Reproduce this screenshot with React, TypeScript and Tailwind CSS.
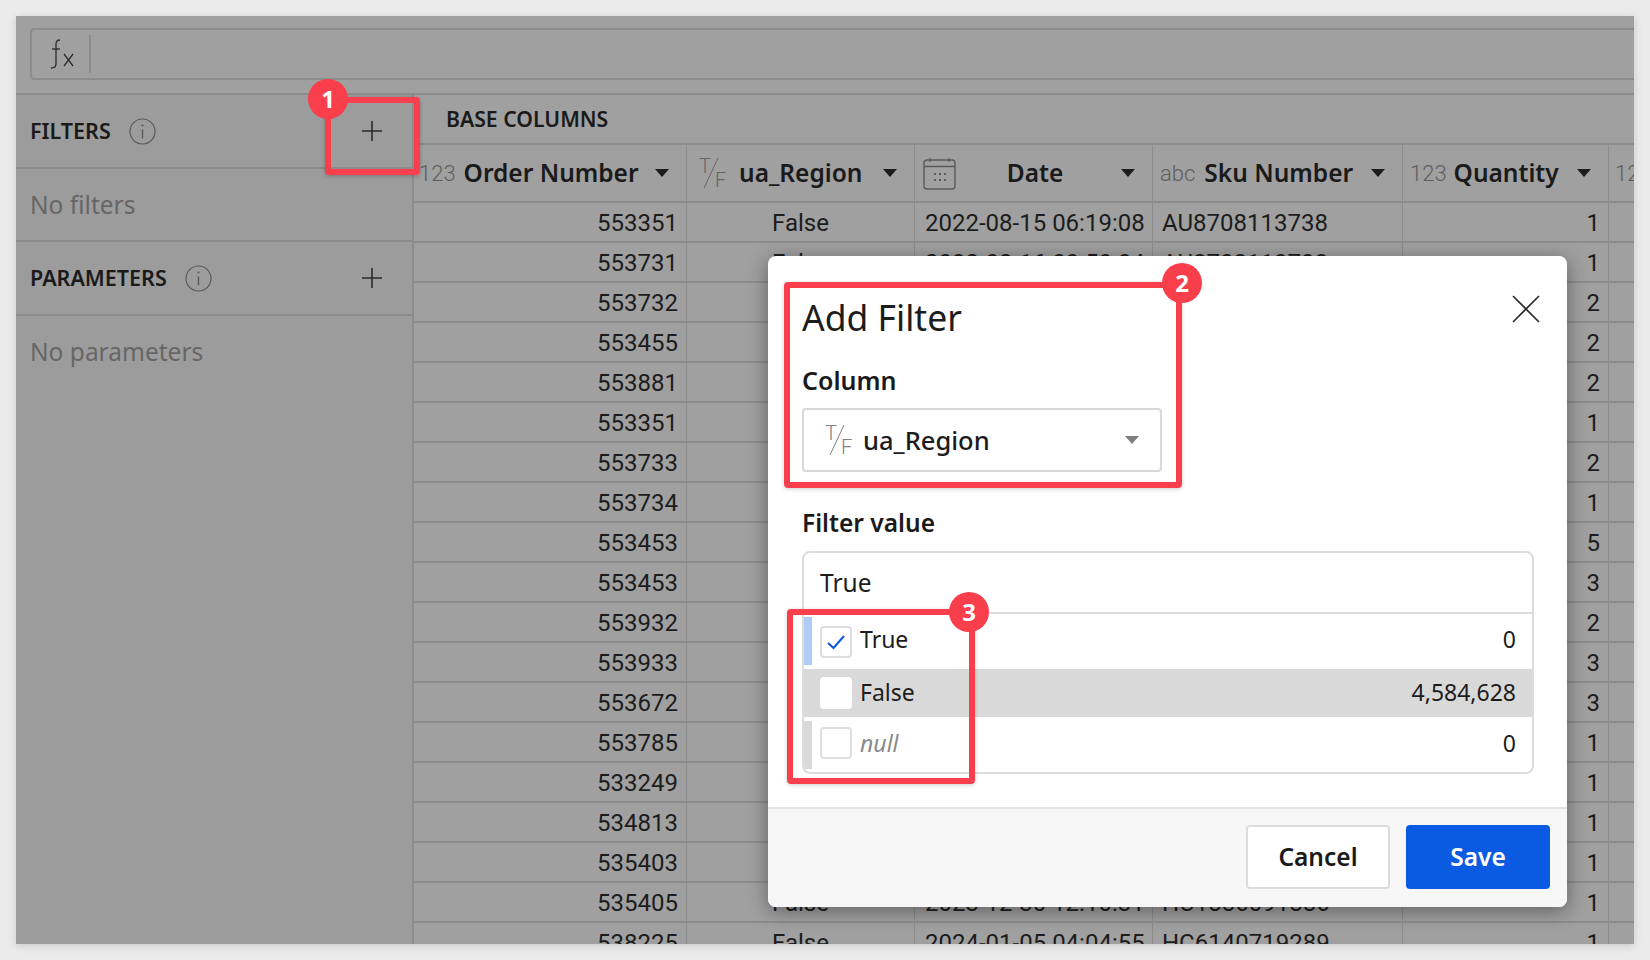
import type { ReactNode } from "react";

const ROWS = [
  ["553351", "False", "2022-08-15 06:19:08", "AU8708113738", "1"],
  ["553731", "False", "2022-08-16 00:50:04", "AU8708113738", "1"],
  ["553732", "False", "2022-08-16 00:50:04", "AU8708113738", "2"],
  ["553455", "False", "2022-08-16 02:11:40", "AU8708113738", "2"],
  ["553881", "False", "2022-08-17 10:21:33", "AU8708113738", "2"],
  ["553351", "False", "2022-08-15 06:19:08", "AU8708113738", "1"],
  ["553733", "False", "2022-08-16 00:50:04", "AU8708113738", "2"],
  ["553734", "False", "2022-08-16 00:50:04", "AU8708113738", "1"],
  ["553453", "False", "2022-08-16 02:11:40", "AU8708113738", "5"],
  ["553453", "False", "2022-08-16 02:11:40", "AU8708113738", "3"],
  ["553932", "False", "2022-08-18 07:42:15", "AU8708113738", "2"],
  ["553933", "False", "2022-08-18 07:42:15", "AU8708113738", "3"],
  ["553672", "False", "2022-08-19 11:05:27", "AU8708113738", "3"],
  ["553785", "False", "2022-08-20 09:36:52", "AU8708113738", "1"],
  ["533249", "False", "2023-03-02 14:28:09", "HC1886091886", "1"],
  ["534813", "False", "2023-05-11 16:03:44", "HC1886091886", "1"],
  ["535403", "False", "2023-12-30 12:10:31", "HC1886091886", "1"],
  ["535405", "False", "2023-12-30 12:10:31", "HC1886091886", "1"],
  ["538225", "False", "2024-01-05 04:04:55", "HC6140719289", "1"],
];

const GRID = "grid grid-cols-[273px_228px_238px_250px_206px_1fr]";

function PlusIcon() {
  return (
    <svg width="22" height="22" viewBox="0 0 22 22" className="text-[#2b2b2b]">
      <path d="M11 1v20M1 11h20" stroke="currentColor" strokeWidth="1.6" />
    </svg>
  );
}

function InfoIcon() {
  return (
    <svg width="27" height="27" viewBox="0 0 27 27" className="text-[#5a5a5a]">
      <circle cx="13.5" cy="13.5" r="12.5" fill="none" stroke="currentColor" strokeWidth="1.2" />
      <path d="M13.5 11.5v9" stroke="currentColor" strokeWidth="1.4" />
      <circle cx="13.5" cy="7.5" r="1.1" fill="currentColor" />
    </svg>
  );
}

function FxIcon() {
  return (
    <svg width="26" height="30" viewBox="0 0 26 30" fill="none" stroke="#2b2b2b" strokeWidth="1.3">
      <path d="M11 1C8 1 7 2.500 7 5v20c0 2.500-1.500 4-5 4" />
      <path d="M3 10h8" />
      <path d="M15 15l9 12M24 15l-9 12" />
    </svg>
  );
}

function Caret({ color = "#1c1c1c" }: { color?: string }) {
  return (
    <svg width="14" height="8" viewBox="0 0 14 8">
      <path d="M0 0h14L7 8z" fill={color} />
    </svg>
  );
}

function BoolIcon({ color }: { color: string }) {
  return (
    <svg width="28" height="32" viewBox="0 0 28 32" fontFamily="Roboto, sans-serif" fontSize="20" fontWeight="300">
      <text x="0" y="16" fill={color}>T</text>
      <path d="M19 1L5 31" stroke={color} strokeWidth="1" />
      <text x="16" y="30" fill={color}>F</text>
    </svg>
  );
}

function CalendarIcon() {
  return (
    <svg width="33" height="33" viewBox="0 0 33 33" fill="none" stroke="#5a5a5a">
      <rect x="1" y="3" width="31" height="29" rx="3" strokeWidth="1.4" />
      <path d="M1 9.500h31M7 1v4M26 1v4" strokeWidth="1.4" />
      <path d="M11 17h2M16 17h2M21 17h2M11 23h2M16 23h2M21 23h2" strokeWidth="2.2" />
    </svg>
  );
}

function HeaderCell({
  icon,
  label,
  pad,
  labelClass,
}: {
  icon: ReactNode;
  label: string;
  pad: string;
  labelClass: string;
}) {
  return (
    <div className={`flex h-full items-center border-r border-[#8c8c8c] pr-[17px] ${pad}`}>
      <span className="flex shrink-0 items-center">{icon}</span>
      <span className={`flex-1 whitespace-nowrap font-semibold text-[#1a1a1a] ${labelClass}`}>{label}</span>
      <Caret />
    </div>
  );
}

function TypeTag({ children }: { children: ReactNode }) {
  return <span className="font-['Roboto',sans-serif] text-[22px] font-light text-[#5e5e5e]">{children}</span>;
}

function SectionHeader({ label }: { label: string }) {
  return (
    <div className="flex h-[74px] items-center border-b-2 border-[#8c8c8c] pl-3.5 pr-[29px]">
      <span className="text-[21.500px] font-semibold text-[#1a1a1a]">{label}</span>
      <span className="ml-[18px] flex"><InfoIcon /></span>
      <span className="ml-auto flex"><PlusIcon /></span>
    </div>
  );
}

function Callout({ n, className }: { n: number; className: string }) {
  return (
    <div className={`absolute z-20 flex h-10 w-10 items-center justify-center rounded-full bg-[#f93e4c] text-[24px] font-bold text-white ${className}`}>
      {n}
    </div>
  );
}

function FilterOption({
  label,
  count,
  bar,
  selected,
  hovered,
  italic,
  rowClass,
  textClass,
}: {
  label: string;
  count: string;
  bar?: string;
  selected?: boolean;
  hovered?: boolean;
  italic?: boolean;
  rowClass: string;
  textClass: string;
}) {
  return (
    <div className={`relative flex items-center pl-4 pr-4 ${rowClass} ${hovered ? "bg-[#d9d9d9]" : ""}`}>
      {bar && <div className={`absolute left-0 w-2 ${bar}`} />}
      <div className={`flex h-8 w-8 items-center justify-center rounded bg-white ${hovered ? "" : "border-2 border-[#dedede]"}`}>
        {selected && (
          <svg width="20" height="16" viewBox="0 0 20 16" fill="none">
            <path d="M2 9l5.500 5L18 2" stroke="#0b5be2" strokeWidth="2" />
          </svg>
        )}
      </div>
      <span className={`ml-2 text-[23px] ${textClass} ${italic ? "italic text-[#8a8a8a]" : "text-[#1c1c1c]"}`}>{label}</span>
      <span className={`ml-auto text-[23px] text-[#1c1c1c] ${textClass}`}>{count}</span>
    </div>
  );
}

export default function App() {
  return (
    <div className="h-[960px] w-[1650px] overflow-hidden bg-[#ebebeb] p-4 font-['Noto_Sans',sans-serif]">
      <div className="relative h-[928px] w-[1618px] overflow-hidden bg-[#a0a0a0] shadow-[0_2px_8px_rgba(0,0,0,0.15)]">
        {/* Formula bar */}
        <div className="flex h-[79px] items-start border-b-2 border-[#8c8c8c] pl-3.5 pt-3">
          <div className="flex h-[52px] flex-1 items-center rounded-l border-2 border-r-0 border-[#8c8c8c]">
            <span className="ml-[17px] flex w-10"><FxIcon /></span>
            <div className="h-[38px] w-0.5 bg-[#8c8c8c]" />
          </div>
        </div>

        <div className="flex h-[849px]">
          {/* Sidebar */}
          <div className="w-[398px] shrink-0 border-r-2 border-[#8c8c8c] bg-[#9c9c9c]">
            <SectionHeader label="FILTERS" />
            <div className="flex h-[73px] items-center border-b-2 border-[#8c8c8c] pl-3.5 pt-0.5 text-[24.500px] text-[#666]">No filters</div>
            <SectionHeader label="PARAMETERS" />
            <div className="flex h-[73px] items-center pl-3.5 text-[24.500px] text-[#666]">No parameters</div>
          </div>

          {/* Table */}
          <div className="min-w-0 flex-1 overflow-hidden">
            <div className="flex h-[50px] items-center border-b-2 border-[#8c8c8c] pl-8 text-[21.200px] font-semibold text-[#1a1a1a]">BASE COLUMNS</div>
            <div className={`${GRID} h-[58px] border-b-2 border-[#8c8c8c] text-[24.500px]`}>
              <HeaderCell icon={<TypeTag>123</TypeTag>} label="Order Number" pad="pl-[5px]" labelClass="ml-2" />
              <HeaderCell icon={<BoolIcon color="#666" />} label="ua_Region" pad="pl-3" labelClass="ml-3" />
              <HeaderCell icon={<CalendarIcon />} label="Date" pad="pl-2" labelClass="pr-[7px] text-center" />
              <HeaderCell icon={<TypeTag>abc</TypeTag>} label="Sku Number" pad="pl-[7px]" labelClass="ml-[9px]" />
              <HeaderCell icon={<TypeTag>123</TypeTag>} label="Quantity" pad="pl-[7px]" labelClass="ml-[7px]" />
              <div className="flex items-center pl-1.5"><TypeTag>123</TypeTag></div>
            </div>
            {ROWS.map((row, i) => (
              <div key={i} className={`${GRID} h-10 grid-rows-[38px] border-b-2 border-[#8c8c8c] font-['Roboto',sans-serif] text-[24px] leading-[40px] text-[#1c1c1c]`}>
                <div className="border-r border-[#8c8c8c] pr-2 text-right">{row[0]}</div>
                <div className="border-r border-[#8c8c8c] text-center">{row[1]}</div>
                <div className="whitespace-nowrap border-r border-[#8c8c8c] pl-2.5">{row[2]}</div>
                <div className="border-r border-[#8c8c8c] pl-[9px]">{row[3]}</div>
                <div className="border-r border-[#8c8c8c] pr-2 text-right">{row[4]}</div>
                <div />
              </div>
            ))}
          </div>
        </div>

        {/* Add Filter dialog */}
        <div className="absolute left-[752px] top-[240px] z-10 flex h-[651px] w-[799px] flex-col overflow-hidden rounded-lg bg-white shadow-[0_4px_20px_rgba(0,0,0,0.4)]">
          <div className="flex-1 pl-[34px] pr-[33px]">
            <div className="flex h-[125px] items-center pb-[2px]">
              <span className="text-[35.500px] leading-none text-[#1c1c1c]">Add Filter</span>
              <svg width="28" height="28" viewBox="0 0 28 28" className="absolute right-[27px] top-[39px]">
                <path d="M1 1l26 26M27 1L1 27" stroke="#2b2b2b" strokeWidth="1.6" fill="none" />
              </svg>
            </div>
            <div className="-mt-[14px] flex h-[27px] items-center text-[25px] font-semibold text-[#1a1a1a]">Column</div>
            <div className="mt-[14px] flex h-16 w-[360px] items-center rounded border-2 border-[#d9d9d9] px-[21px]">
              <BoolIcon color="#808080" />
              <span className="ml-[10px] text-[25.500px] font-medium text-[#1c1c1c]">ua_Region</span>
              <span className="ml-auto flex"><Caret color="#808080" /></span>
            </div>
            <div className="mt-[38px] flex h-[27px] items-center text-[24.500px] font-semibold text-[#1a1a1a]">Filter value</div>
            <div className="mt-3.5 flex h-[223px] flex-col overflow-hidden rounded-lg border-2 border-[#dcdcdc]">
              <div className="flex h-[61px] shrink-0 items-center border-b-2 border-[#dcdcdc] pl-4 pt-0.5 text-[24.500px] text-[#1c1c1c]">True</div>
              <FilterOption label="True" count="0" bar="top-[3px] bottom-1 bg-[#b0ccf4]" rowClass="h-[55px]" textClass="-mt-1" selected />
              <FilterOption label="False" count="4,584,628" rowClass="h-12" textClass="-mt-0.5" hovered />
              <FilterOption label="null" count="0" bar="top-1 bottom-[3px] bg-[#d9d9d9]" rowClass="flex-1 pb-1" textClass="mt-0.5" italic />
            </div>
          </div>
          <div className="flex h-[100px] items-center justify-end gap-4 border-t-2 border-[#e2e2e2] bg-[#f7f7f7] pb-0.5 pr-[17px]">
            <div className="flex h-[64px] w-[144px] items-center justify-center rounded border-2 border-[#dcdcdc] bg-white text-[24.500px] font-semibold text-[#1a1a1a]">Cancel</div>
            <div className="flex h-[64px] w-[144px] items-center justify-center rounded bg-[#0b5be2] text-[24.500px] font-semibold text-white">Save</div>
          </div>
        </div>

        {/* Tutorial callouts */}
        <div className="absolute left-[309px] top-[81px] z-20 h-[78px] w-[95px] rounded-sm border-[6px] border-[#f93e4c] shadow-[0_1px_4px_rgba(0,0,0,0.25)]" />
        <Callout n={1} className="left-[292px] top-[63px]" />
        <div className="absolute left-[768px] top-[266px] z-20 h-[206px] w-[398px] rounded-sm border-[6px] border-[#f93e4c] shadow-[0_1px_4px_rgba(0,0,0,0.2)]" />
        <Callout n={2} className="left-[1146px] top-[247px]" />
        <div className="absolute left-[771px] top-[593px] z-20 h-[175px] w-[188px] rounded-sm border-[6px] border-[#f93e4c] shadow-[0_1px_4px_rgba(0,0,0,0.2)]" />
        <Callout n={3} className="left-[933px] top-[576px]" />
      </div>
    </div>
  );
}
